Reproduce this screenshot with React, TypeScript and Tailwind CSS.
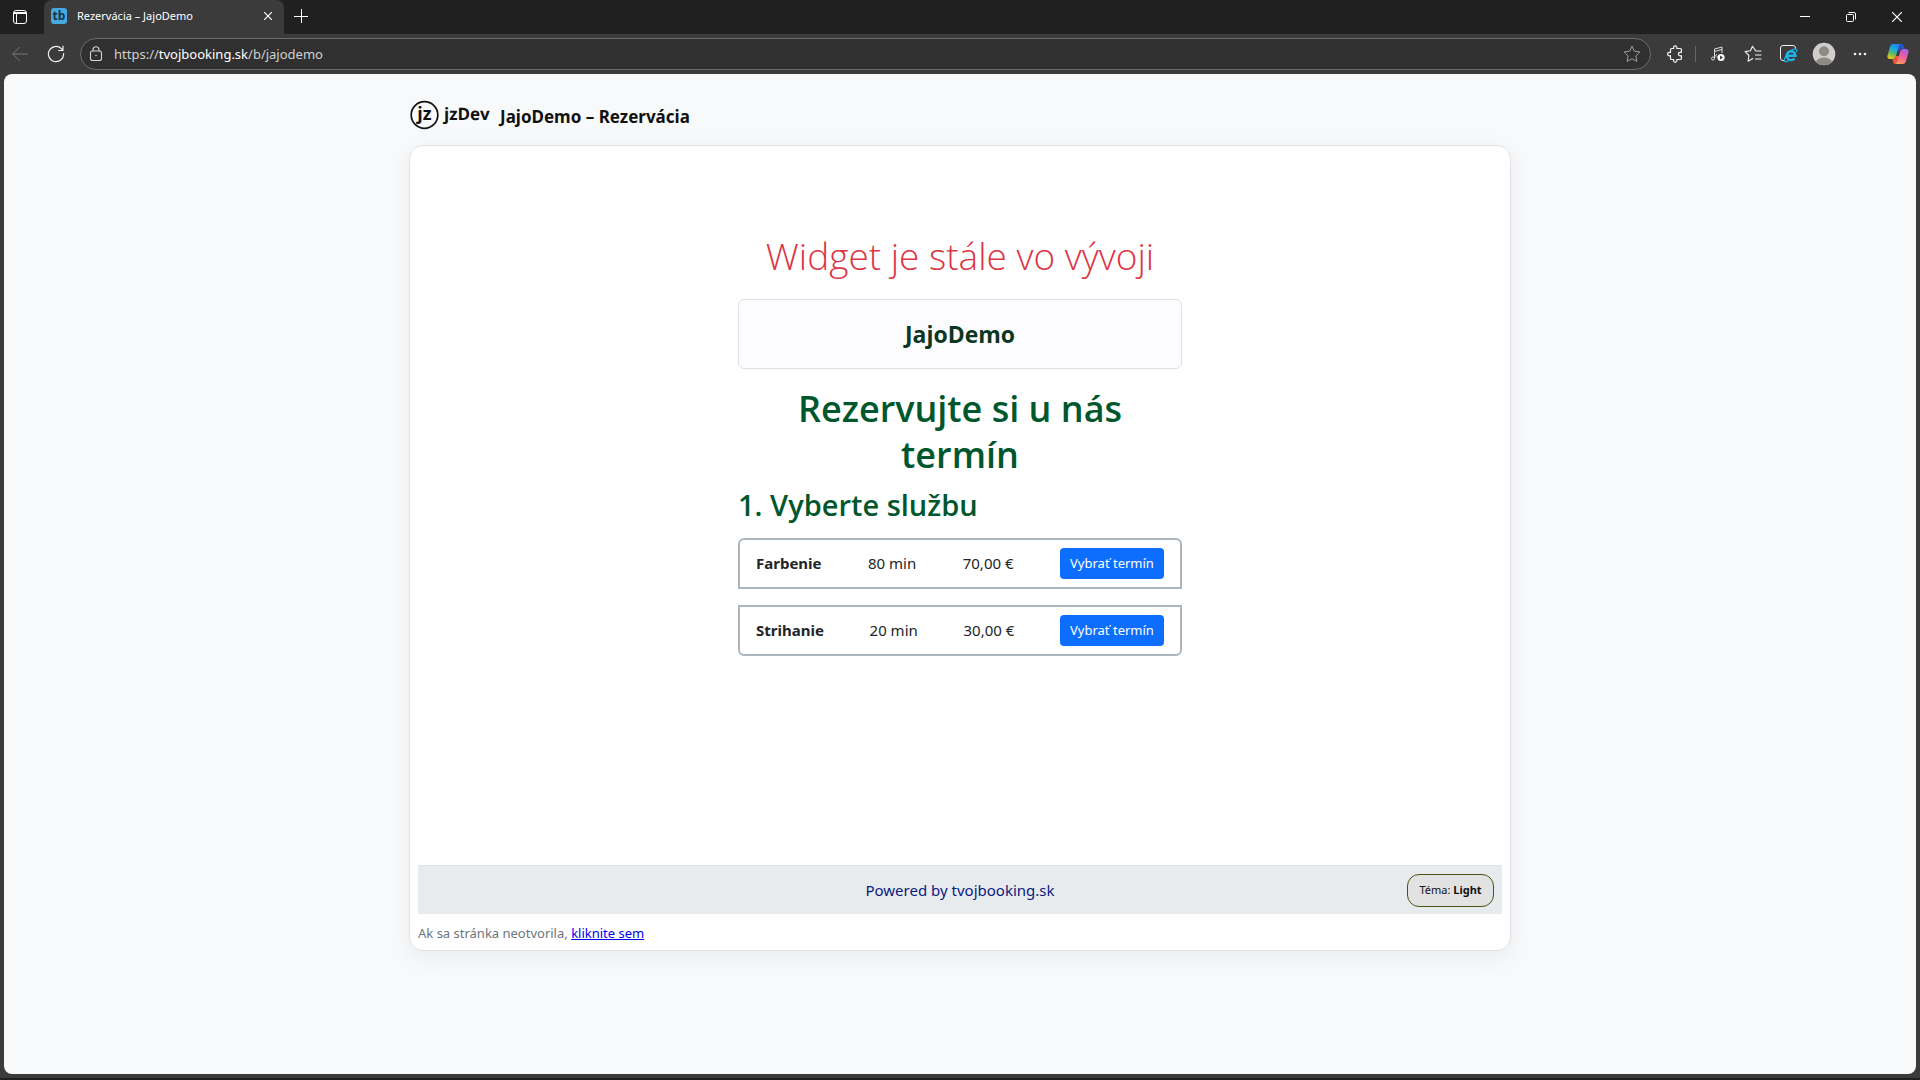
import type { ReactNode } from 'react';

const services = [
  { name: 'Farbenie', duration: '80 min', price: '70,00 €', shape: 'rounded-t-md' },
  { name: 'Strihanie', duration: '20 min', price: '30,00 €', shape: 'rounded-b-md' },
];

function IconButton({ label, children, className = '' }: { label: string; children: ReactNode; className?: string }) {
  return (
    <button type="button" aria-label={label} className={`flex shrink-0 items-center justify-center ${className}`}>
      {children}
    </button>
  );
}

function TabsIcon() {
  return (
    <svg width="16" height="16" viewBox="0 0 16 16" fill="none" stroke="#fff">
      <rect x="1.5" y="1.5" width="13" height="13" rx="2.5" />
      <path d="M2 3.5h12M2 4.5h12M4.5 5v9.5" />
    </svg>
  );
}

function BackIcon() {
  return (
    <svg width="16" height="16" viewBox="0 0 16 16" fill="none" stroke="#777" strokeLinecap="round" strokeLinejoin="round">
      <path d="M15.5 8H.7M7.5 1.2L.7 8l6.8 6.8" />
    </svg>
  );
}

function RefreshIcon() {
  return (
    <svg width="18" height="18" viewBox="0 0 18 18" fill="none" stroke="#f0f0f0" strokeWidth="1.2" strokeLinecap="round" strokeLinejoin="round">
      <path d="M16.6 8.5A7.6 7.6 0 1 1 14.2 3.5L15.8 5.2M16 1.2v4.3h-4.4" />
    </svg>
  );
}

function LockIcon() {
  return (
    <svg width="14" height="16" viewBox="0 0 14 16" fill="none" stroke="#d8d8d8" strokeWidth="1.1">
      <rect x="1.5" y="5" width="11" height="9.5" rx="2" />
      <path d="M4 5V3.8a3 3 0 0 1 6 0V5" />
      <circle cx="7" cy="9.5" r="0.8" fill="#d8d8d8" stroke="none" />
    </svg>
  );
}

function StarIcon() {
  return (
    <svg width="18" height="18" viewBox="0 0 18 18" fill="none" stroke="#a0a0a0" strokeLinejoin="round">
      <path d="M9 1.2l2.4 5 5.5.8-4 3.900 1 5.500L9 13.800l-4.900 2.600 1-5.500-4-3.900 5.500-.8z" />
    </svg>
  );
}

function PuzzleIcon() {
  return (
    <svg width="16" height="18" viewBox="0 0 16 18" fill="none" stroke="#f2f2f2" strokeWidth="1.2" strokeLinejoin="round">
      <path d="M4.500 3.500h2.200C6.300 1.700 7 .8 8.200.8s2 .9 1.600 2.700h3.600a1 1 0 0 1 1 1v3c-1.900-.5-3 .3-3 1.600s1.100 2.100 3 1.600v2.800a1 1 0 0 1-1 1H9.800c.4 1.800-.4 2.700-1.600 2.700s-1.900-.9-1.500-2.700H4.500a1 1 0 0 1-1-1v-2.800C1.600 11.200.6 10.400.6 9.100s1-2.100 2.900-1.600v-3a1 1 0 0 1 1-1z" />
    </svg>
  );
}

function MusicIcon() {
  return (
    <svg width="16" height="16" viewBox="0 0 16 16" fill="none" stroke="#ddd" strokeLinejoin="round">
      <path d="M4.500 12.500V3L12 1v6M4.500 5.500L12 3.500" />
      <circle cx="3" cy="12.500" r="1.500" />
      <path d="M7 8.500c-1.500 0-2 2-.5 2.500" />
      <circle cx="11" cy="11.500" r="3.600" fill="#fff" stroke="none" />
      <path d="M10 9.500l3 2-3 2z" fill="#3b3b3b" stroke="none" />
    </svg>
  );
}

function FavoritesIcon() {
  return (
    <svg width="18" height="18" viewBox="0 0 18 18" fill="none" stroke="#f2f2f2" strokeWidth="1.1" strokeLinecap="round" strokeLinejoin="round">
      <path d="M17 6h-5.200L8.500 1.200l-2.100 4.600-5.300.8 3.800 3.900-.8 5.700 4.600-2.600M11.500 10H17M11.500 14H17" />
    </svg>
  );
}

function ExplorerIcon() {
  return (
    <svg width="18" height="18" viewBox="0 0 18 18" fill="none">
      <path d="M4 15.500H3A2.500 2.500 0 0 1 .5 13V3A2.500 2.500 0 0 1 3 .5h10A2.500 2.500 0 0 1 15.500 3v1" stroke="#eee" />
      <path d="M6.800 10.800h8.700A4.400 4.400 0 1 0 14.500 13.500" stroke="#1eb4ea" strokeWidth="2.4" />
      <path d="M6 10.500C2.500 17 5.500 17.800 9 15.500M11 5.500c4-2.500 7.300-2 5.300 1.500" stroke="#1eb4ea" strokeWidth="1.2" />
    </svg>
  );
}

function ProfileIcon() {
  return (
    <svg width="24" height="24" viewBox="0 0 24 24">
      <defs><clipPath id="avatar"><circle cx="12" cy="12" r="11.3" /></clipPath></defs>
      <circle cx="12" cy="12" r="11.3" fill="#d0cecb" />
      <g fill="#8e8a86" clipPath="url(#avatar)">
        <circle cx="12" cy="9.3" r="5" />
        <ellipse cx="12" cy="21" rx="8" ry="5.5" />
      </g>
    </svg>
  );
}

function CopilotIcon() {
  return (
    <svg width="22" height="22" viewBox="0 0 22 22">
      <defs>
        <linearGradient id="cool" x1="0.6" y1="0" x2="0.3" y2="1">
          <stop offset="0" stopColor="#1b84ee" /><stop offset=".35" stopColor="#20a9dc" />
          <stop offset=".65" stopColor="#5cb968" /><stop offset="1" stopColor="#f5c90c" />
        </linearGradient>
        <linearGradient id="warm" x1="0.7" y1="0" x2="0.3" y2="1">
          <stop offset="0" stopColor="#a95be8" /><stop offset=".5" stopColor="#f0609a" /><stop offset="1" stopColor="#fb9a55" />
        </linearGradient>
      </defs>
      <path d="M11 1h3.500c1.600 0 2.200 1.200 2.600 2.500l.7 2.500h-3c-1.500 0-2.200.8-2.700 2.500L9 6z" fill="#2152c8" />
      <path d="M6 1h8c-1.500.5-2 1.500-2.500 3L9 13c-.6 2-1.500 3-3.300 3H3c-2.300 0-3-1.500-2.400-3.800L3 4C3.600 2 4.500 1 6 1z" fill="url(#cool)" />
      <path d="M5.500 16c1.800 0 2.800-1 3.400-3h4l-2 5.500c-.6 1.800-1.300 2.500-2.800 2.500-1.300 0-1.800-1-2.100-2.500z" fill="#ef5442" />
      <path d="M16 21H8c1.500-.5 2-1.500 2.500-3L13 9c.6-2 1.500-3 3.300-3H19c2.300 0 3 1.500 2.400 3.800L19 18c-.6 2-1.500 3-3 3z" fill="url(#warm)" />
    </svg>
  );
}

function BrandLogo() {
  return (
    <svg width="80" height="32" viewBox="0 0 80 32" role="img" aria-label="jzDev" fill="#111" fontFamily='"Open Sans", sans-serif'>
      <circle cx="14.500" cy="16" r="13.300" fill="none" stroke="#111" strokeWidth="1.700" />
      <text x="14.500" y="21" textAnchor="middle" fontSize="18" fontWeight="700">jz</text>
      <text x="34" y="21" fontSize="17" fontWeight="700" textRendering="geometricPrecision">jzDev</text>
    </svg>
  );
}

function BrowserChrome() {
  return (
    <header className="shrink-0 bg-[#3b3b3b]">
      <div className="flex h-[34px] bg-[#202020]">
        <IconButton label="Karty" className="w-11 pr-1">
          <TabsIcon />
        </IconButton>
        <div className="flex w-60 items-center rounded-t-lg bg-[#3b3b3b] pr-2 pb-[2px] pl-[7px]">
          <span className="flex size-4 items-center justify-center rounded-[3px] bg-[#45a9e2] text-[12px] leading-none font-bold text-[#173349]">tb</span>
          <span className="ml-[10px] flex-1 text-[11px] text-white">Rezervácia – JajoDemo</span>
          <IconButton label="Zavrieť kartu" className="size-4">
            <svg width="8" height="8" viewBox="0 0 8 8" stroke="#fff" strokeWidth="1.2"><path d="M0 0l8 8M8 0L0 8" /></svg>
          </IconButton>
        </div>
        <IconButton label="Nová karta" className="w-[34px] pb-[2px]">
          <svg width="14" height="14" viewBox="0 0 14 14" stroke="#fff"><path d="M7.500 0v14M0 7.500h14" /></svg>
        </IconButton>
        <div className="ml-auto flex">
          <IconButton label="Minimalizovať" className="w-[46px]">
            <svg width="10" height="10" viewBox="0 0 10 10" stroke="#fff"><path d="M0 4.500h10" /></svg>
          </IconButton>
          <IconButton label="Obnoviť okno" className="w-[46px]">
            <svg width="10" height="10" viewBox="0 0 10 10" fill="none" stroke="#fff">
              <rect x=".5" y="2.5" width="7" height="7" rx="1" /><path d="M2.500.5H8A1.500 1.500 0 0 1 9.500 2v5.500" />
            </svg>
          </IconButton>
          <IconButton label="Zavrieť" className="w-[46px]">
            <svg width="10" height="10" viewBox="0 0 10 10" stroke="#fff" strokeWidth="1.2"><path d="M0 0l10 10M10 0L0 10" /></svg>
          </IconButton>
        </div>
      </div>
      <div className="flex h-10 items-center pr-[11px] pl-3">
        <IconButton label="Späť" className="mr-[19px] size-4"><BackIcon /></IconButton>
        <IconButton label="Obnoviť" className="mr-[15px] size-[18px]"><RefreshIcon /></IconButton>
        <label className="flex h-8 flex-1 items-center rounded-full border border-[#6b6b6b] bg-[#303030] pr-[9px] pl-2">
          <LockIcon />
          <span className="relative ml-[11px] flex-1 text-[13px] leading-[18px] text-[#d0d0d0]">
            <input aria-label="Adresa" defaultValue="https://tvojbooking.sk/b/jajodemo" className="absolute inset-0 w-full bg-transparent text-transparent outline-none" />
            <span aria-hidden="true">https://<span className="text-white">tvojbooking.sk</span>/b/jajodemo</span>
          </span>
          <StarIcon />
        </label>
        <IconButton label="Rozšírenia" className="ml-4 w-4"><PuzzleIcon /></IconButton>
        <span className="ml-3 h-4 w-px bg-[#666]" />
        <IconButton label="Médiá" className="ml-[14px] w-4"><MusicIcon /></IconButton>
        <IconButton label="Obľúbené" className="ml-[18px] w-[18px]"><FavoritesIcon /></IconButton>
        <IconButton label="Režim Internet Explorer" className="ml-[18px] w-[18px]"><ExplorerIcon /></IconButton>
        <IconButton label="Profil" className="ml-[14px] w-6"><ProfileIcon /></IconButton>
        <IconButton label="Nastavenia" className="ml-4 w-4">
          <svg width="14" height="4" viewBox="0 0 14 4" fill="#eee"><circle cx="2" cy="2" r="1.3" /><circle cx="7" cy="2" r="1.3" /><circle cx="12" cy="2" r="1.3" /></svg>
        </IconButton>
        <IconButton label="Copilot" className="ml-[19px] w-[22px]"><CopilotIcon /></IconButton>
      </div>
    </header>
  );
}

function ServiceRow({ service }: { service: (typeof services)[number] }) {
  return (
    <li className={`flex items-center justify-between border-2 border-[#adb5bd] px-4 py-2 text-[15px] leading-[31px] text-[#212529] ${service.shape}`}>
      <strong className="font-bold">{service.name}</strong>
      <span>{service.duration}</span>
      <span>{service.price}</span>
      <button type="button" className="h-[31px] w-[104px] rounded-sm bg-[#0d6efd] text-[13px] leading-[21px] text-white">Vybrať termín</button>
    </li>
  );
}

function BookingWidget() {
  return (
    <section className="flex min-h-[719px] flex-1 flex-col items-center pt-[84px]">
      <div className="w-full max-w-[444px]">
        <p className="mb-[17px] text-center font-['Open_Sans',sans-serif] text-[37px] leading-[52px] font-light text-[#dc3545]">Widget je stále vo vývoji</p>
        <div className="rounded-md border border-[#dee2e6] bg-[#fcfcfe] py-5 text-center font-['Open_Sans',sans-serif] text-[23px] leading-7 font-bold text-[#0a3622]">JajoDemo</div>
        <h1 className="mt-[17px] px-12 text-center font-['Open_Sans',sans-serif] text-[36px] leading-[46px] font-semibold text-[#00572d]">Rezervujte si u nás termín</h1>
        <h2 className="mt-2 mb-[14px] font-['Open_Sans',sans-serif] text-[29px] leading-[38px] font-semibold text-[#00572d]">1. Vyberte službu</h2>
        <ul className="flex flex-col gap-4">
          {services.map((service) => <ServiceRow key={service.name} service={service} />)}
        </ul>
      </div>
    </section>
  );
}

export default function App() {
  return (
    <div className="flex min-h-screen flex-col bg-[#3b3b3b] font-['Noto_Sans','Open_Sans',sans-serif]">
      <BrowserChrome />
      <main className="mx-1 mb-1 flex-1 rounded-lg bg-[#f8f9fb] px-4 pt-[25px]">
        <div className="mx-auto max-w-[1102px]">
          <div className="mb-[14px] flex h-8 items-center gap-[10px] pl-px">
            <BrandLogo />
            <span className="pt-1 text-[17px] leading-6 font-bold text-[#111]">JajoDemo – Rezervácia</span>
          </div>
          <div className="flex flex-col rounded-[14px] border border-[#dee2e6] bg-white px-2 pb-[7px] shadow-[0_6px_24px_rgba(0,0,0,0.06)]">
            <BookingWidget />
            <footer className="grid h-[49px] grid-cols-[1fr_auto_1fr] items-center border-t border-[#dee2e6] bg-[#e8ebee] px-2">
              <a href="#tvojbooking" className="col-start-2 text-[15px] text-[#0a1a80]">Powered by tvojbooking.sk</a>
              <button type="button" className="h-[33px] w-[87px] justify-self-end rounded-xl border border-[#4c5210] bg-[#e2e2e2] text-[11px] text-[#111]">
                Téma: <b>Light</b>
              </button>
            </footer>
            <p className="mt-[10px] text-[13px] leading-[19px] text-[#6c757d]">
              Ak sa stránka neotvorila, <a href="#rezervacia" className="text-[#0000ee] underline">kliknite sem</a>
            </p>
          </div>
        </div>
      </main>
      <div className="h-[2px] bg-[#202020]" />
    </div>
  );
}
